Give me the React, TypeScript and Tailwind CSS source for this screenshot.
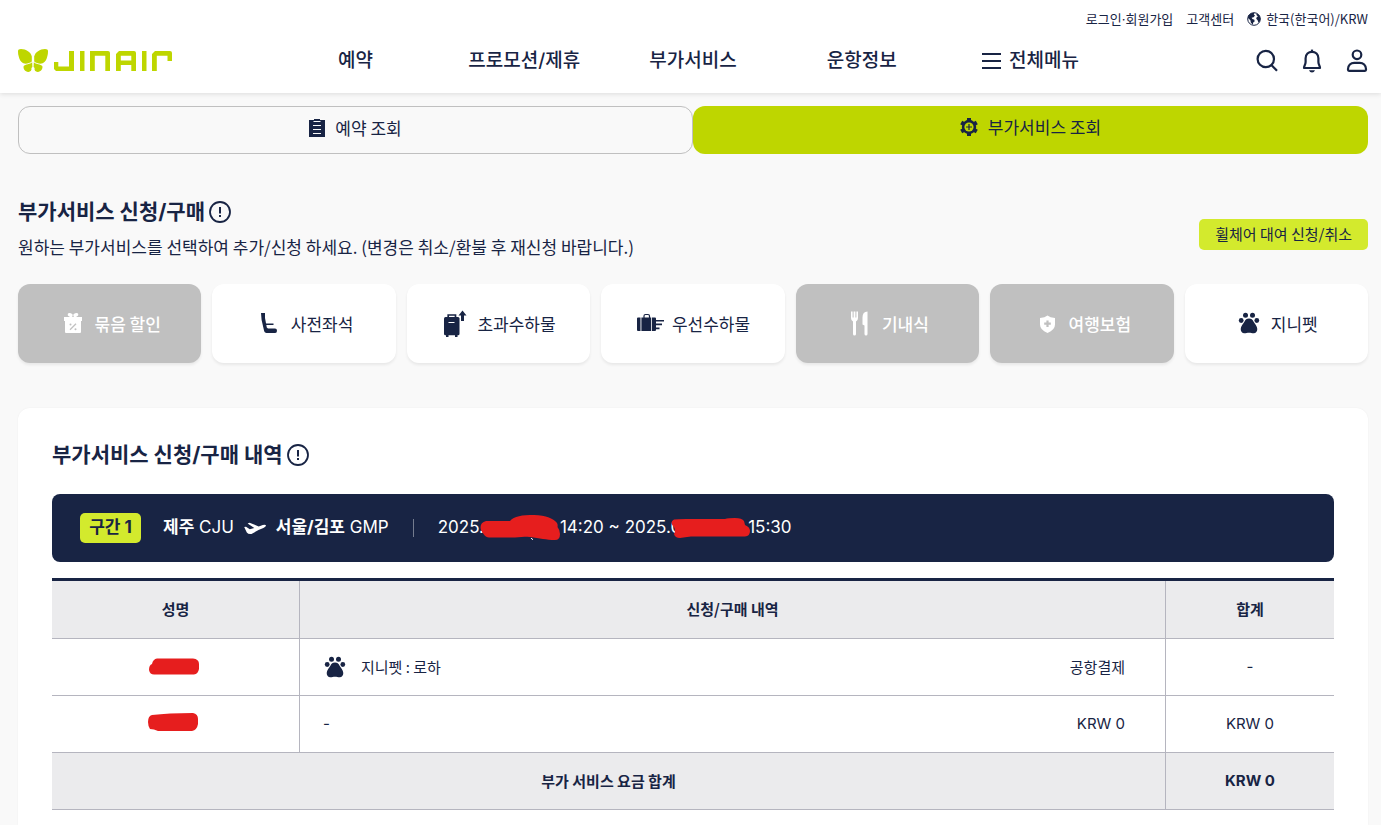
import type { ReactNode } from "react";
import clsx from "clsx";

type Service = {
  label: string;
  icon: ReactNode;
  disabled?: boolean;
};

function Logo() {
  return (
    <svg width="154" height="23" viewBox="0 0 154 23" fill="#bed600" aria-hidden="true">
      <path d="M3 0C8 0 13 3.4 13.8 7.5V12.5C11.5 14.3 8.5 15 6 14.5C1.8 13.4 0 7 0 2Q0 0 3 0Z" />
      <path d="M27 0C22 0 17 3.4 16.2 7.5V12.5C18.5 14.3 21.5 15 24 14.5C28.2 13.4 30 7 30 2Q30 0 27 0Z" />
      <path d="M14.2 13.2C12.5 15 7 15.4 5.7 17C4.8 19.8 7.3 23 10.3 22.9C12.8 22.8 13.9 21 13.4 19L14.4 18Z" />
      <path d="M15.8 13.2C17.5 15 23 15.4 24.3 17C25.2 19.8 22.7 23 19.7 22.9C17.2 22.8 16.1 21 16.6 19L15.6 18Z" />
      <path d="M36 13h4.3v4.5H51V2h5v20H38l-2-2Z" />
      <path d="M62 2h4.5v20H62Z" />
      <path d="M72 22V2h18q2 0 2 2v18h-4.7V6.8H76.8V22Z" />
      <path
        fillRule="evenodd"
        d="M98 22V5l3-3h15q2 0 2 2v18h-4.7v-6h-10.5v6Zm4.8-15.2v4.7h10.5V6.8Z"
      />
      <path d="M124 2h4.5v20H124Z" />
      <path d="M134 22V5l3-3h15q2 0 2 2v8h-4.5V6.8h-10.7V22Z" />
    </svg>
  );
}

function GlobeIcon() {
  return (
    <svg width="14" height="14" viewBox="0 0 14 14" aria-hidden="true">
      <circle cx="7" cy="7" r="6.3" fill="none" stroke="#182444" strokeWidth="1" />
      <path
        fill="#182444"
        d="M1.2 3.6 4 1.2 7.5.8 6.8 2.6 8 3.4 6.6 5.2 4.6 5.8 5.4 7 7.4 7.8 7.6 9.4 6.2 10.6 5.8 12.8 3.8 10.6 3.4 8.2 1 6ZM9.6 1.2 12.4 3.2 13.4 6.4 12.8 9.4 11.4 10.6 10.6 8.2 9.2 6.8 9.8 5 11 4.4 9.4 3Z"
      />
    </svg>
  );
}

function SearchIcon() {
  return (
    <svg width="22" height="24" viewBox="0 0 22 24" fill="none" stroke="#182444" strokeWidth="2.2" aria-hidden="true">
      <circle cx="9.8" cy="10" r="8.2" />
      <path d="m15.600 16.200 5.400 5.600" />
    </svg>
  );
}

function BellIcon() {
  return (
    <svg width="22" height="24" viewBox="0 0 22 24" fill="none" stroke="#182444" strokeWidth="2.2" aria-hidden="true">
      <path strokeLinejoin="round" d="M3 19h16c0-2.500-1.600-3-1.600-6V9.200C17.400 5.400 14.600 2.800 11 2.800S4.600 5.400 4.600 9.200v3.800c0 3-1.600 3.500-1.600 6Z" />
      <path d="M11 3V.6" />
      <path fill="#182444" stroke="none" d="M8 21.200h6q-.8 2.200-3 2.200t-3-2.200Z" />
    </svg>
  );
}

function UserIcon() {
  return (
    <svg width="22" height="24" viewBox="0 0 22 24" fill="none" stroke="#182444" strokeWidth="2.2" aria-hidden="true">
      <circle cx="11" cy="5.8" r="4.3" />
      <path
        strokeLinejoin="round"
        d="M3 21.800Q2 21.800 2 20.800V20C2 16.400 4.800 13.800 8.200 13.800H13.800C17.200 13.800 20 16.400 20 20V20.800Q20 21.800 19 21.800Z"
      />
    </svg>
  );
}

function ClipboardIcon() {
  return (
    <svg width="16" height="18" viewBox="0 0 16 18" aria-hidden="true">
      <path fill="#182444" d="M0 1h5V0h6v1h5v17H0Z" />
      <path stroke="#f9f9f9" d="M4.500 2.500h7M4 6.500h8M4 10.500h8M4 14.500h8" />
    </svg>
  );
}

function GearIcon() {
  return (
    <svg width="18" height="18" viewBox="0 0 18 18" aria-hidden="true">
      <g fill="#182444">
        <circle cx="9" cy="9" r="7.2" />
        <rect x="7" y="0" width="4" height="18" />
        <rect x="7" y="0" width="4" height="18" transform="rotate(60 9 9)" />
        <rect x="7" y="0" width="4" height="18" transform="rotate(120 9 9)" />
      </g>
      <circle cx="9" cy="9" r="4.6" fill="#bed600" />
      <path stroke="#182444" strokeWidth="1.2" d="M9 6v6M6 9h6" />
    </svg>
  );
}

function InfoIcon() {
  return (
    <svg width="22" height="22" viewBox="0 0 22 22" fill="none" stroke="#182444" aria-hidden="true">
      <circle cx="11" cy="11" r="10" strokeWidth="1.8" />
      <path strokeWidth="2" d="M11 6v6.500M11 14v2" />
    </svg>
  );
}

function GiftIcon() {
  return (
    <svg width="32" height="32" viewBox="0 0 32 32" fill="#fff" aria-hidden="true">
      <ellipse cx="13.2" cy="7" rx="2.6" ry="1.9" transform="rotate(20 13.2 7)" />
      <ellipse cx="18.8" cy="7" rx="2.6" ry="1.9" transform="rotate(-20 18.8 7)" />
      <path d="M7 9h18v4H7ZM8 13h16V24q0 1-1 1H9q-1 0-1-1Z" />
      <path stroke="#c0c0c0" strokeWidth="1.3" d="m13 21.800 6-6" />
      <circle cx="13.5" cy="16.4" r="1" fill="#c0c0c0" />
      <circle cx="18.5" cy="21.2" r="1" fill="#c0c0c0" />
    </svg>
  );
}

function SeatIcon() {
  return (
    <svg width="32" height="32" viewBox="0 0 32 32" fill="#182444" aria-hidden="true">
      <path d="M8 5h4v5l1.800 9.500L15 20.500h7q2 0 2 2.300T22 25h-8.500q-1.800 0-2.300-1.800L8.600 12Z" />
      <path d="M13 15.500h7.500v1.500H13Z" />
    </svg>
  );
}

function ExtraBagIcon() {
  return (
    <svg width="32" height="32" viewBox="0 0 32 32" fill="#182444" aria-hidden="true">
      <path d="M9.200 10V7h7.300v3" fill="none" stroke="#182444" strokeWidth="1.7" />
      <rect x="5" y="9" width="15.5" height="18.3" rx="1.5" />
      <path d="M7 27h2.500v2H7ZM16 27h2.500v2H16Z" />
      <path stroke="#fff" d="M9.500 14.500h6" />
      <path d="M23.500 2.500 27.500 7.500H25V13h-3V7.500h-2.500Z" />
    </svg>
  );
}

function PriorityBagIcon() {
  return (
    <svg width="32" height="32" viewBox="0 0 32 32" fill="#182444" aria-hidden="true">
      <path d="M10 10V8q0-1.500 1.500-1.500h2.500q1.500 0 1.500 1.500v2" fill="none" stroke="#182444" strokeWidth="1.2" />
      <path d="M3 10.500q0-1 1-1h2.500v13.500H4q-1 0-1-1ZM7.400 9.500h9.800v13.500H7.400ZM18 9.500h3q1 0 1 1V12h8v1.600h-8v2h6v1.600h-6v2.400h3.500v1.600H22v.8q0 1-1 1h-3Z" />
    </svg>
  );
}

function MealIcon() {
  return (
    <svg width="32" height="32" viewBox="0 0 32 32" fill="#fff" aria-hidden="true">
      <path d="M7 3.500h1.600v6h1V3.500h1.800v6h1V3.500H14v6.500q0 2.500-2 3.500v12.500q0 1.500-1.500 1.500T9 26V13.500q-2-1-2-3.500Z" />
      <path d="M23.500 3.500v22.500q0 1.500-1.500 1.500t-1.500-1.500v-8.500l-2-1V9.500q0-6 5-6Z" />
    </svg>
  );
}

function InsuranceIcon() {
  return (
    <svg width="32" height="32" viewBox="0 0 32 32" aria-hidden="true">
      <path fill="#fff" d="M16.500 7.500Q19 9.500 24 10v6.500q0 5.500-7.500 8.500Q9 22 9 16.500V10q5-.5 7.500-2.500Z" />
      <path stroke="#c0c0c0" strokeWidth="2.2" d="M16.500 12.500v6.500M13.200 15.700h6.600" />
    </svg>
  );
}

function PawIcon({ small = false }: { small?: boolean }) {
  const size = small ? 24 : 32;
  return (
    <svg width={size} height={size} viewBox={small ? "4 3 24 24" : "0 0 32 32"} fill="#182444" aria-hidden="true">
      <circle cx="12.5" cy="7.3" r="2.5" />
      <circle cx="19.5" cy="7.3" r="2.5" />
      <circle cx="8.2" cy="12.5" r="2.4" />
      <circle cx="23.8" cy="12.5" r="2.4" />
      <path d="M16 10.500c2.200 0 3.600 1.200 4.600 3.200s3.700 4.200 3.700 7.300c0 2.600-1.400 4.300-3.600 4.300-1.800 0-2.900-.5-4.700-.5s-2.900.5-4.700.5c-2.200 0-3.600-1.700-3.600-4.300 0-3.100 2.700-5.300 3.700-7.300s2.400-3.200 4.600-3.200Z" />
    </svg>
  );
}

function PlaneIcon() {
  return (
    <svg width="22" height="13" viewBox="0 0 22 13" fill="#fff" aria-hidden="true">
      <path d="M.2 5 2 4.700 5.800 7.200 10.300 6 3.600 1.500 5.600.7 14.700 4.400 18.800 3Q21.800 2.300 22 3.600 21.900 4.900 19.400 6L14.500 8 7.500 11.900Q4.500 12.600 2.800 10.400Z" />
    </svg>
  );
}

const RED = "#e61e1e";

function DateMaskA() {
  return (
    <svg width="80" height="26" viewBox="0 0 80 26" className="-ml-1 shrink-0" aria-hidden="true">
      <path
        fill={RED}
        d="M6 6H30C34 1 42 0 54 0C66 0 74 4 77 8Q78 10 77.500 12Q80 15 80 19Q80 25 75 25C66 25 60 23 50 22C42 21 38 22.500 32 22.500H9C5 22.500 3 18 1 15Q-1 8 6 6Z"
      />
      <path stroke="#fff" d="M51 23q1 1.500 2 1.500" fill="none" />
    </svg>
  );
}

function DateMaskB() {
  return (
    <svg width="79" height="22" viewBox="0 0 79 22" className="-mr-[2px] -ml-[10px] shrink-0" aria-hidden="true">
      <path
        fill={RED}
        d="M3 2.500Q6 2 15 2H54Q57 1 64 1Q71 1 73 4L74 8Q79 10 79 14Q79 19 74 19.500H20Q14 20 9 21Q4 21 3 17Q5 14 3 10Q-2 5 3 2.500Z"
      />
    </svg>
  );
}

function NameMask({ second = false }: { second?: boolean }) {
  return (
    <svg
      width="50"
      height="18"
      viewBox="0 0 50 18"
      className={clsx("inline-block", second ? "mr-[6px] mb-[5px]" : "mr-1 mb-[2px]")}
      aria-hidden="true"
    >
      <path
        fill={RED}
        d={
          second
            ? "M4 2Q20 0 45 0Q50 1 50 6V11Q49 17 44 18H10Q6 16 2 16Q0 13 0 9Q0 3 4 2Z"
            : "M8 .5H44Q50 1 50 6V11Q49 16 45 16.500H6Q1 17 0 12Q0 7 3 6Q4 1 8 .5Z"
        }
      />
    </svg>
  );
}

const latin = "font-['Inter','Noto_Sans_CJK_KR',sans-serif]";

const menus = ["예약", "프로모션/제휴", "부가서비스", "운항정보"];

const services: Service[] = [
  { label: "묶음 할인", icon: <GiftIcon />, disabled: true },
  { label: "사전좌석", icon: <SeatIcon /> },
  { label: "초과수하물", icon: <ExtraBagIcon /> },
  { label: "우선수하물", icon: <PriorityBagIcon /> },
  { label: "기내식", icon: <MealIcon />, disabled: true },
  { label: "여행보험", icon: <InsuranceIcon />, disabled: true },
  { label: "지니펫", icon: <PawIcon /> },
];

function Header() {
  return (
    <header className="relative bg-white pr-[13px] pl-[18px] shadow-[0_1px_5px_rgba(0,0,0,0.12)]">
      <div className="flex h-7 items-end justify-end gap-[13px] text-[13px] leading-[18px]">
        <a href="#login" className={latin}>
          로그인·회원가입
        </a>
        <a href="#support">고객센터</a>
        <button type="button" className="flex items-center gap-[5px]">
          <GlobeIcon />
          한국(한국어)/KRW
        </button>
      </div>
      <div className="flex h-[65px] items-center">
        <a href="#home" aria-label="JINAIR" className="flex-1">
          <Logo />
        </a>
        <nav className={clsx("grid w-5/8 grid-cols-5 text-[19px] leading-7 font-medium", latin)}>
          {menus.map((menu) => (
            <a key={menu} href="#menu" className="text-center">
              {menu}
            </a>
          ))}
          <button type="button" className="flex items-center justify-center gap-2">
            <svg width="19" height="18" viewBox="0 0 19 18" stroke="#182444" strokeWidth="2" aria-hidden="true">
              <path d="M0 2h19M0 9h19M0 16h19" />
            </svg>
            전체메뉴
          </button>
        </nav>
        <div className="flex flex-1 items-center justify-end gap-[23px]">
          <button type="button" aria-label="검색">
            <SearchIcon />
          </button>
          <button type="button" aria-label="알림">
            <BellIcon />
          </button>
          <button type="button" aria-label="마이페이지">
            <UserIcon />
          </button>
        </div>
      </div>
    </header>
  );
}

function HistoryTable() {
  return (
    <table className="mt-4 w-full table-fixed border-separate border-spacing-0 border-t-3 border-[#182444] text-[15px] [&_td]:border-[#b5b5bf] [&_th]:border-[#b5b5bf]">
      <thead className="bg-[#ebebed]">
        <tr className="h-[58px]">
          <th className="w-[248px] border-r border-b font-bold">성명</th>
          <th className="border-r border-b font-bold">신청/구매 내역</th>
          <th className="w-[168px] border-b font-bold">합계</th>
        </tr>
      </thead>
      <tbody>
        <tr className="h-[57px]">
          <td className="border-r border-b text-center">
            <NameMask />
          </td>
          <td className="border-r border-b pr-10 pl-[23px]">
            <div className="flex items-center gap-[14px]">
              <PawIcon small />
              <span>지니펫 : 로하</span>
              <span className="ml-auto">공항결제</span>
            </div>
          </td>
          <td className={clsx("border-b text-center", latin)}>-</td>
        </tr>
        <tr className="h-[57px]">
          <td className="border-r border-b text-center">
            <NameMask second />
          </td>
          <td className={clsx("border-r border-b pr-10 pl-[23px]", latin)}>
            <div className="flex items-center justify-between">
              <span>-</span>
              <span>KRW 0</span>
            </div>
          </td>
          <td className={clsx("border-b text-center", latin)}>KRW 0</td>
        </tr>
      </tbody>
      <tfoot className="bg-[#ebebed]">
        <tr className="h-[57px]">
          <th colSpan={2} className="border-r border-b font-bold">
            부가 서비스 요금 합계
          </th>
          <td className={clsx("border-b text-center font-bold", latin)}>KRW 0</td>
        </tr>
      </tfoot>
    </table>
  );
}

export default function App() {
  return (
    <div className="flex min-h-screen flex-col bg-[#f9f9f9] font-['Noto_Sans_CJK_KR',sans-serif] text-[#182444]">
      <Header />

      <main className="flex flex-1 flex-col pt-[13px] pr-[13px] pl-[18px]">
        <div className="grid grid-cols-2 text-[17px]">
          <button
            type="button"
            className="flex h-12 items-center justify-center gap-[10px] rounded-xl border border-[#c0c0c0] pb-1"
          >
            <ClipboardIcon />
            예약 조회
          </button>
          <button
            type="button"
            className="flex h-12 items-center justify-center gap-[10px] rounded-xl bg-[#bed600] pb-[6px]"
          >
            <GearIcon />
            부가서비스 조회
          </button>
        </div>

        <div className="mt-11 flex items-end justify-between">
          <div>
            <h2 className={clsx("flex items-center gap-1 text-[21px] leading-7 font-bold", latin)}>
              부가서비스 신청/구매
              <InfoIcon />
            </h2>
            <p className="mt-[9px] text-[17px] leading-6">
              원하는 부가서비스를 선택하여 추가/신청 하세요. (변경은 취소/환불 후 재신청 바랍니다.)
            </p>
          </div>
          <button
            type="button"
            className="mb-[9px] h-[31px] rounded-[5px] bg-[#d3ea2d] px-4 text-[15px]"
          >
            휠체어 대여 신청/취소
          </button>
        </div>

        <div className="mt-[25px] grid grid-cols-7 gap-[11px]">
          {services.map((s) => (
            <button
              key={s.label}
              type="button"
              disabled={s.disabled}
              className={clsx(
                "flex h-[79px] items-center justify-center gap-[6px] rounded-xl pr-[2px] text-[17px] shadow-[0_2px_3px_rgba(0,0,0,0.07)]",
                s.disabled ? "bg-[#c0c0c0] font-medium text-white" : "bg-white"
              )}
            >
              {s.icon}
              {s.label}
            </button>
          ))}
        </div>

        <section className="mt-[45px] flex-1 rounded-t-xl bg-white px-[34px] pt-[33px] shadow-[0_0_2px_rgba(0,0,0,0.05)]">
          <h3 className={clsx("flex items-center gap-1 text-[21px] leading-7 font-bold", latin)}>
            부가서비스 신청/구매 내역
            <InfoIcon />
          </h3>

          <div
            className={clsx(
              "mt-[25px] flex h-[68px] items-center rounded-lg bg-[#182444] px-7 text-[17px] text-white",
              latin
            )}
          >
            <span className="flex h-[30px] w-[61px] items-center justify-center rounded-[5px] bg-[#d3ea2d] font-bold text-[#182444]">
              구간 1
            </span>
            <p className="ml-[22px] flex items-center gap-[10px]">
              <span>
                <strong>제주</strong> CJU
              </span>
              <PlaneIcon />
              <span>
                <strong>서울/김포</strong> GMP
              </span>
            </p>
            <span className="mx-6 h-[18px] w-px bg-[#747c8f]" />
            <p className="flex items-center">
              <span>2025.</span>
              <DateMaskA />
              <span className="whitespace-pre">14:20 ~ 2025.0</span>
              <DateMaskB />
              <span>15:30</span>
            </p>
          </div>

          <HistoryTable />
        </section>
      </main>
    </div>
  );
}
